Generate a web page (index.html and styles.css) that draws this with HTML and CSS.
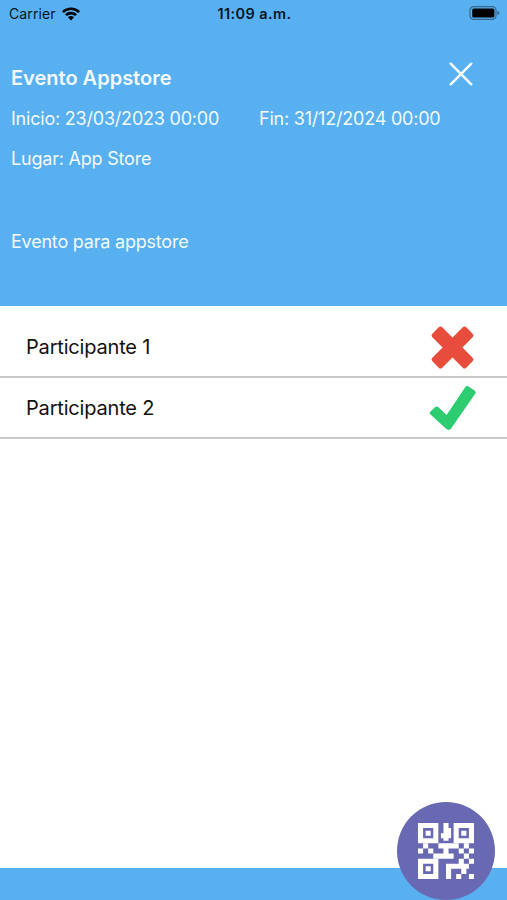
FILE: index.html
```html
<!DOCTYPE html>
<html lang="es">
<head>
<meta charset="utf-8">
<title>Evento Appstore</title>
<link rel="stylesheet" href="styles.css">
</head>
<body>
<div class="screen">
  <header class="header">
    <div class="status">
      <div class="carrier"><span class="carrier-name">Carrier</span>
        <svg class="wifi" width="18" height="14" viewBox="0 0 18 14"><path d="M0 4.2A12.7 12.7 0 0 1 18 4.2L16.2 6.1A10.2 10.2 0 0 0 1.8 6.1ZM3 7.3A8.5 8.5 0 0 1 15 7.3L13.2 9.1A6 6 0 0 0 4.8 9.1ZM6 10.3A4.2 4.2 0 0 1 12 10.3L9 13.5Z"/></svg>
      </div>
      <span class="time">11:09 a.m.</span>
      <svg class="battery" width="31" height="15" viewBox="0 0 31 15"><rect x="1" y=".7" width="26" height="12.6" rx="3.6" fill="none" stroke="#35698f" stroke-width="1.2"/><rect x="3.2" y="2.4" width="22.2" height="9.2" rx="1.5"/><path d="M28.4 4.8Q30.5 5.5 30.5 7T28.4 9.2Z" fill="#35698f"/></svg>
    </div>
    <div class="title-row">
      <h1 class="title">Evento Appstore</h1>
      <svg class="close" width="24" height="24" viewBox="0 0 24 24"><path d="M1.7 1.7 22.3 22.3M22.3 1.7 1.7 22.3"/></svg>
    </div>
    <div class="dates"><span class="start">Inicio: 23/03/2023 00:00</span><span>Fin: 31/12/2024 00:00</span></div>
    <p class="place">Lugar: App Store</p>
    <p class="description">Evento para appstore</p>
  </header>
  <ul class="list">
    <li class="row"><span>Participante 1</span>
      <svg class="mark" width="48" height="48" viewBox="0 0 48 48"><g class="cross" transform="translate(24.5 24.5)"><rect x="-24" y="-7" width="48" height="14" rx="2.5" transform="rotate(45)"/><rect x="-24" y="-7" width="48" height="14" rx="2.5" transform="rotate(-45)"/></g></svg>
    </li>
    <li class="row"><span>Participante 2</span>
      <svg class="mark" width="48" height="48" viewBox="0 0 48 48"><path class="check" d="M2.5 27.5 7.2 23Q8.6 21.8 10.2 23L18.6 31 37 3.4Q38.5 1.3 40.5 2.5L46.6 6.4Q48.5 7.8 47.2 9.8L23.5 44Q21.2 47.5 17.8 44.5L2.5 30.4Q1 29 2.5 27.5Z"/></svg>
    </li>
  </ul>
  <footer class="footer">
    <div class="scan">
      <svg class="qr" width="56" height="56" viewBox="0 0 22 22"><path fill-rule="evenodd" d="M0 0h8v8H0ZM2 2v4h4V2ZM3 3h2v2H3ZM14 0h8v8h-8ZM16 2v4h4V2ZM17 3h2v2h-2ZM0 14h8v8H0ZM2 16v4h4v-4ZM3 17h2v2H3Z"/><path d="M10 0h2v2h1v4h-1v1h-2V6H9V4h1ZM2 8h2v2H2ZM0 10h2v2H0ZM4 10h2v2H4ZM8 8h6v2h-2v2h2v2H6v-2h4v-2H8ZM14 8h2v2h-2ZM18 8h2v2h-2ZM16 10h2v2h-2ZM20 10h2v2h-2ZM18 12h2v2h-2ZM16 14h2v2h-2ZM20 14h2v2h-2ZM11 16h9v2h-1v2h-2v-2h-4v4h-2ZM15 20h2v2h-2ZM20 20h2v2h-2Z"/></svg>
    </div>
  </footer>
</div>
</body>
</html>
```
FILE: styles.css
```css
* { box-sizing: border-box; }
body { margin: 0; background: #fff; font-family: Inter, "Liberation Sans", sans-serif; }
.screen { height: 900px; display: flex; flex-direction: column; overflow: hidden; }
.header { height: 306px; background: #58b0f0; color: #f2faff; font-size: 18px; letter-spacing: -0.21px; }
.status { height: 27px; display: grid; grid-template-columns: 1fr auto 1fr; align-items: center; padding: 0 7px 0 9px; color: #071623; font-size: 14px; letter-spacing: 0.1px; }
.carrier { display: flex; align-items: center; gap: 6px; }
.time { font-weight: 600; font-size: 14.5px; letter-spacing: 0.4px; }
.battery { justify-self: end; }
.title-row { height: 36px; margin-top: 32px; display: flex; justify-content: space-between; padding: 0 34px 0 11px; }
.title { margin: 0; font-size: 20px; line-height: 38px; font-weight: 600; letter-spacing: 0; }
.close { margin-top: 3px; fill: none; stroke: #fff; stroke-width: 2.4; stroke-linecap: round; }
.dates { display: flex; padding-left: 11px; margin-top: 12px; line-height: 24px; white-space: nowrap; }
.start { width: 248px; }
.place, .description { margin: 0; padding-left: 11px; line-height: 24px; }
.place { margin-top: 16px; }
.description { margin-top: 59px; }
.list { list-style: none; margin: 0; padding: 10px 0 0; flex: 1; color: #111; font-size: 20px; letter-spacing: -0.18px; }
.row { height: 61px; display: flex; align-items: center; justify-content: space-between; border-bottom: 2px solid #c8c8c8; padding: 2px 31px 0 26px; }
.row:first-child { height: 62px; }
.row:last-child { height: 60.5px; }
.cross { fill: #e74c3c; }
.check { fill: #2ecc71; }
.footer { height: 32px; background: #58b0f0; display: flex; justify-content: flex-end; align-items: flex-end; padding-right: 12px; }
.scan { width: 98px; height: 98px; flex: none; border-radius: 50%; background: #6968b2; display: flex; align-items: center; justify-content: center; }
.qr { fill: #fff; }
```
